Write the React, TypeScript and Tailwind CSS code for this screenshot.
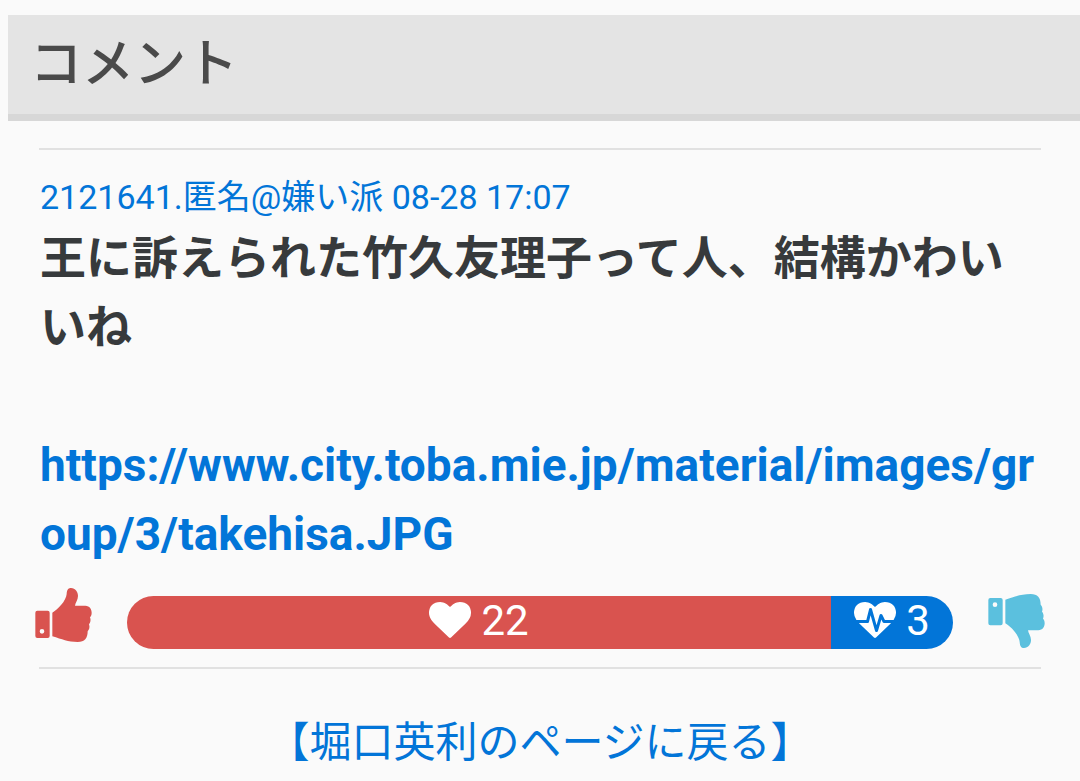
import { useState } from "react";

const HEART =
  "M896 1664q-26 0-44-18l-624-602q-10-8-27.5-26t-55.5-65.5-68-97.5-53.5-121-23.5-138q0-220 127-344t351-124q62 0 126.5 21.5t120 58 95.5 68.5 76 68q36-36 76-68t95.5-68.5 120-58 126.5-21.5q224 0 351 124t127 344q0 221-229 450l-623 600q-18 18-44 18z";
const HEARTBEAT =
  "M1280 1024h305q-5 6-10 10.5t-9 7.5l-3 4-623 600q-18 18-44 18t-44-18l-624-602q-5-2-21-20h369q22 0 39.5-13.5t22.5-34.5l70-281 190 667q6 20 23 33t39 13q21 0 38-13t23-33l146-485 56 112q18 35 57 35zm512-428q0 145-103 300h-369l-111-221q-8-17-25.5-27t-36.5-8q-45 5-56 46l-129 430-196-686q-6-20-23.5-33t-39.5-13-39 13.5-22 34.5l-116 464h-423q-103-155-103-300 0-220 127-344t351-124q62 0 126.5 21.5t120 58 95.5 68.5 76 68q36-36 76-68t95.5-68.5 120-58 126.5-21.5q224 0 351 124t127 344z";

function HeartIcon({ d }: { d: string }) {
  return (
    <svg viewBox="0 128 1792 1536" className="h-9 w-[42px]" fill="currentColor" aria-hidden="true">
      <path d={d} />
    </svg>
  );
}

function ThumbIcon({ down = false }: { down?: boolean }) {
  return (
    <svg
      viewBox="0 0 171 162"
      className={down ? "h-[54px] w-[57px] -scale-y-100" : "h-[54px] w-[57px]"}
      fill="currentColor"
      aria-hidden="true"
    >
      <path
        fillRule="evenodd"
        d="M7 68h31q6 0 6 6v70q0 6-6 6H7q-6 0-6-6V74q0-6 6-6zM21 123a7 7 0 1 0 0 14a7 7 0 1 0 0-14z"
      />
      <path d="M52 74C67 66 94 38 95 18C96 6 99 0 108 0C121 0 129 12 129 24C129 36 121 44 120 53H151C164 53 170 64 170 74C170 81 168 85 165 88C168 95 167 104 162 109C165 117 163 125 158 130C158 151 149 162 128 162C98 162 82 154 52 145z" />
    </svg>
  );
}

export default function App() {
  const [votes, setVotes] = useState({ good: 22, bad: 3 });

  return (
    <main
      className="min-h-screen w-full bg-[#fafafa] pt-[15px] text-[#373a3c]"
      style={{ fontFamily: 'Roboto, "Noto Sans CJK JP", sans-serif' }}
      lang="ja"
    >
      <h2 className="ml-2 border-b-[7px] border-[#d7d7d7] bg-[#e4e4e4] px-[22px] pt-[14px] pb-[13px] text-[52px] leading-[72px] font-medium text-[#4a4a4a]">
        コメント
      </h2>

      <article className="mx-[39px] mt-[27px] border-y-2 border-[#e1e1e1] pt-[23px] pb-[18px]">
        <div className="pl-px">
          <a href="#2121641" className="block pb-[3px] text-[34px] leading-[48px] text-[#0275d8]">
            2121641.匿名@嫌い派 08-28 17:07
          </a>
          <div className="text-[46px] leading-[69px] font-bold break-all">
            <p>王に訴えられた竹久友理子って人、結構かわいいね</p>
            <br />
            <a href="https://www.city.toba.mie.jp/material/images/group/3/takehisa.JPG" className="text-[#0275d8]">
              https://www.city.toba.mie.jp/material/images/group/3/takehisa.JPG
            </a>
          </div>
        </div>

        <div className="-mx-1 mt-[27px] flex items-center gap-[35px]">
          <button
            aria-label="いいね"
            className="-mt-4 cursor-pointer text-[#d9534f]"
            onClick={() => setVotes({ ...votes, good: votes.good + 1 })}
          >
            <ThumbIcon />
          </button>
          <div className="flex h-[53px] flex-1 overflow-hidden rounded-full text-[42px] leading-[50px] text-white">
            <div className="flex flex-1 justify-center gap-[10px] bg-[#d9534f]">
              <span className="pt-[6px]">
                <HeartIcon d={HEART} />
              </span>
              {votes.good}
            </div>
            <div className="flex w-[122px] justify-center gap-[10px] bg-[#0275d8]">
              <span className="pt-[6px]">
                <HeartIcon d={HEARTBEAT} />
              </span>
              {votes.bad}
            </div>
          </div>
          <button
            aria-label="よくないね"
            className="-mt-1 cursor-pointer text-[#5bc0de]"
            onClick={() => setVotes({ ...votes, bad: votes.bad + 1 })}
          >
            <ThumbIcon down />
          </button>
        </div>
      </article>

      <p className="mt-[42px] text-center text-[42px] leading-[63px]">
        <a href="#top" className="text-[#0275d8]">
          【堀口英利のページに戻る】
        </a>
      </p>
    </main>
  );
}
